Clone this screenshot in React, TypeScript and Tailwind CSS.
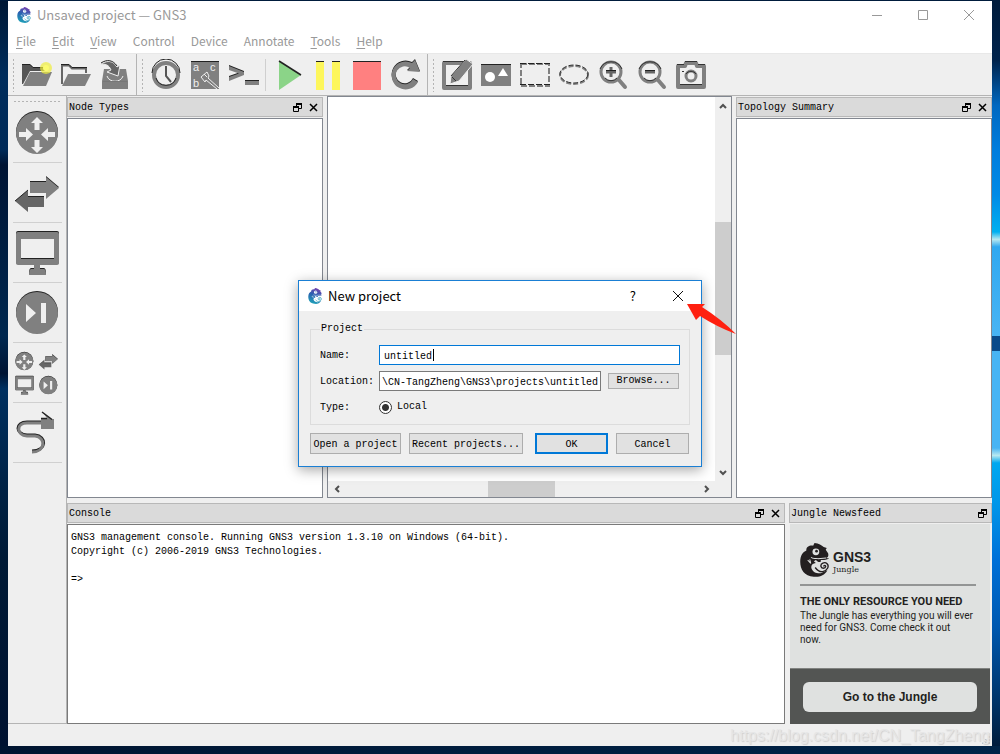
import { useId } from 'react';
import type { ReactNode } from 'react';

const menus = ['File', 'Edit', 'View', 'Control', 'Device', 'Annotate', 'Tools', 'Help'];
const underlined = ['File', 'Edit', 'View', 'Tools', 'Help'];

// Draws a shape twice so that its top edge gets the dark line of the classic icon set
function Embossed({ children }: { children: ReactNode }) {
  return (
    <>
      <g fill="#222" stroke="none">{children}</g>
      <g fill="#808080" transform="translate(0 1)">{children}</g>
    </>
  );
}

function Chameleon({ color, detail, className }: { color?: string; detail: string; className: string }) {
  const id = useId();
  return (
    <svg viewBox="0 0 84 100" className={className} aria-hidden="true">
      <defs>
        <linearGradient id={id} x1="0.7" y1="0" x2="0.4" y2="1">
          <stop offset="0" stopColor="#7b3fae" />
          <stop offset="0.45" stopColor="#2b5fb0" />
          <stop offset="1" stopColor="#1fa0b8" />
        </linearGradient>
      </defs>
      <g fill={color || `url(#${id})`}>
        <path d="M38 8L42 0C55 1 63 6 69 12L78 15L75 20L82 30C84 38 82 43 76 44L86 46C76 50 68 51 60 50C63 55 58 57 52 55L46 50L40 54L46 59C36 60 31 66 33 74C37 86 48 90 60 89L80 80C71 96 56 101 40 99C12 97 0 78 0 55C0 36 8 27 18 22C17 12 27 6 38 8Z" />
        <path d="M44 72C50 80 56 86 66 84C80 82 86 68 79 61C72 54 59 60 61 69C62 76 74 76 75 69C75 65 69 65 69 69" fill="none" stroke={color || '#1f95b5'} strokeWidth="4" />
      </g>
      <circle cx="46" cy="26" r="10" fill={detail} />
      <circle cx="48" cy="24" r="4" fill={color || '#2b5fb0'} />
      <path d="M32 42C36 48 46 44 52 46L76 44M22 50L31 60L28 48" fill="none" stroke={detail} strokeWidth="3" />
    </svg>
  );
}

function Icon({ children }: { children: ReactNode }) {
  return (
    <svg width="32" height="32" viewBox="0 0 32 32" fill="#808080" aria-hidden="true">
      {children}
    </svg>
  );
}

const FolderBack = () => <path d="M1 6Q1 5 2 5H9L12 8H24V12H9L2 25H1Z" />;

const newIcon = (
  <Icon>
    <g fill="#555"><FolderBack /></g>
    <path d="M1 5.500H9L12 8.500H24" fill="none" stroke="#222" />
    <path d="M9 13H31L25 27H2Z" />
    <circle cx="25" cy="9" r="6" fill="#f0ee3c" opacity="0.7" />
    <circle cx="25" cy="9" r="3" fill="#fbfb70" />
  </Icon>
);

const openIcon = (
  <Icon>
    <path d="M2 25V6.500H9L12 9.500H26V14" fill="none" stroke="#666" strokeWidth="2" />
    <path d="M1 5.500H9L12 8.500H27" fill="none" stroke="#222" />
    <path d="M8 15H31L25 27H2Z" />
  </Icon>
);

const saveIcon = (
  <Icon>
    <path d="M5 10H27L29 22V30H3V22Z" />
    <path d="M8 17C10 24 22 24 24 17" fill="none" stroke="#efefef" />
    <path d="M4 22.500H28" stroke="#777" />
    <path d="M1 6C7 1 14 1 18 8L21 6L19 17L8 13L12 11C10 6 6 4 1 6Z" fill="#666" stroke="#efefef" />
    <path d="M2 4C8 0 14 1 18 7" fill="none" stroke="#222" />
  </Icon>
);

const clockIcon = (
  <Icon>
    <circle cx="16" cy="16" r="12" fill="none" stroke="#808080" strokeWidth="4" />
    <path d="M2 14A14 14 0 0 1 30 14M6 19A10.500 10.500 0 0 0 26 19" fill="none" stroke="#222" />
    <path d="M16 7V17L21 23" fill="none" stroke="#555" strokeWidth="2" />
  </Icon>
);

const labelsIcon = (
  <Icon>
    <path d="M2 2H30V30H2Z" />
    <path d="M2 2.500H30" stroke="#222" />
    <g fill="#efefef" fontFamily="Liberation Sans" fontSize="11">
      <text x="4" y="12">a</text>
      <text x="21" y="12">c</text>
      <text x="4" y="28">b</text>
    </g>
    <path d="M12 18L18 13L20 17L19 19L30 29M28 30L17 21L16 23L12 18M15 15L18 18" fill="none" stroke="#efefef" />
  </Icon>
);

const consoleIcon = (
  <Icon>
    <Embossed>
      <path d="M1 6L16 12V15L1 21V17L11 13.500L1 10Z" />
      <path d="M17 21H31V25H17Z" />
    </Embossed>
  </Icon>
);

const playIcon = (
  <Icon>
    <path d="M6 2L28 16L6 31Z" fill="#8bd488" />
    <path d="M6 2L28 16" stroke="#222" strokeWidth="1.500" />
  </Icon>
);

const pauseIcon = (
  <Icon>
    <path d="M4 2H12V31H4ZM20 2H28V31H20Z" fill="#fdf65c" />
    <path d="M4 2.500H12M20 2.500H28" stroke="#222" />
  </Icon>
);

const stopIcon = (
  <Icon>
    <path d="M2 2H30V31H2Z" fill="#ff8080" />
    <path d="M2 2.500H30" stroke="#222" />
  </Icon>
);

const reloadIcon = (
  <Icon>
    <Embossed>
      <path d="M22 3L25 0L30 12L17 11L20 8A9 9 0 1 0 23 19L28 22A14 14 0 1 1 22 3Z" />
    </Embossed>
  </Icon>
);

const noteIcon = (
  <Icon>
    <path d="M3 4H29V29H3Z" fill="none" stroke="#808080" strokeWidth="4" strokeLinejoin="round" />
    <path d="M2 2.500H26M5 26.500H27" stroke="#333" />
    <path d="M25 0L32 5L18 22L9 25L10 17Z" stroke="#efefef" />
    <path d="M11 18L15 22M24 1L10 17" stroke="#333" />
  </Icon>
);

const pictureIcon = (
  <Icon>
    <path d="M1 5H31V27H1Z" />
    <path d="M1 5.500H31" stroke="#222" />
    <circle cx="10" cy="18" r="5" fill="#fff" />
    <path d="M23 9L28 17H18Z" fill="#fff" />
  </Icon>
);

const rectIcon = (
  <Icon>
    <path d="M2 5H30V27H2Z" fill="none" stroke="#808080" strokeWidth="2" strokeDasharray="6 2" />
    <path d="M1 4.500H31M1 25.500H31" stroke="#222" strokeDasharray="6 2" />
  </Icon>
);

const ellipseIcon = (
  <Icon>
    <ellipse cx="16" cy="16" rx="14" ry="9" fill="none" stroke="#808080" strokeWidth="2" strokeDasharray="5 2" />
    <ellipse cx="16" cy="15" rx="14" ry="9" fill="none" stroke="#333" strokeDasharray="5 2" />
  </Icon>
);

const zoomIcon = (plus: boolean) => (
  <Icon>
    <circle cx="14" cy="13" r="10" fill="none" stroke="#808080" strokeWidth="3" />
    <path d="M22 21L28 28" stroke="#808080" strokeWidth="4" strokeLinecap="round" />
    <path d="M3 10A12 12 0 0 1 25 10M8 19A8 8 0 0 0 20 19" fill="none" stroke="#333" />
    <path d={plus ? 'M9 13H19M14 8V18' : 'M9 13H19'} stroke="#666" strokeWidth="3" />
    <path d="M9 11.500H19" stroke="#222" />
  </Icon>
);

const cameraIcon = (
  <Icon>
    <path d="M3 7H10L11 4H21L22 7H29V28H3Z" fill="none" stroke="#808080" strokeWidth="4" strokeLinejoin="round" />
    <path d="M2 5.500H9M10 2.500H22M23 5.500H30M5 25.500H27" stroke="#333" />
    <circle cx="16" cy="17" r="5" fill="none" stroke="#808080" strokeWidth="3" />
    <path d="M11 15A6 6 0 0 1 21 15M7 12.500H9" fill="none" stroke="#333" />
  </Icon>
);

type Tool = { label: string; icon: ReactNode };

const fileTools: Tool[] = [
  { label: 'New project', icon: newIcon },
  { label: 'Open project', icon: openIcon },
  { label: 'Save project as', icon: saveIcon },
];
const viewTools: Tool[] = [
  { label: 'Snapshot', icon: clockIcon },
  { label: 'Show interface labels', icon: labelsIcon },
  { label: 'Console to all devices', icon: consoleIcon },
];
const controlTools: Tool[] = [
  { label: 'Start all', icon: playIcon },
  { label: 'Suspend all', icon: pauseIcon },
  { label: 'Stop all', icon: stopIcon },
  { label: 'Reload all', icon: reloadIcon },
];
const drawTools: Tool[] = [
  { label: 'Add a note', icon: noteIcon },
  { label: 'Insert a picture', icon: pictureIcon },
  { label: 'Draw a rectangle', icon: rectIcon },
  { label: 'Draw an ellipse', icon: ellipseIcon },
  { label: 'Zoom in', icon: zoomIcon(true) },
  { label: 'Zoom out', icon: zoomIcon(false) },
  { label: 'Screenshot', icon: cameraIcon },
];

function ToolGroup({ tools }: { tools: Tool[] }) {
  return (
    <div className="flex">
      {tools.map((t) => (
        <button key={t.label} aria-label={t.label} className="w-[39px] h-10 flex items-center justify-center">
          {t.icon}
        </button>
      ))}
    </div>
  );
}

const Grip = () => <div className="w-[3px] h-[34px] bg-[radial-gradient(circle,#b4b4b4_1px,transparent_1px)] bg-[length:3px_4px]" />;

// Device glyphs share a 48x48 grid
const router = (
  <>
    <Embossed><circle cx="24" cy="23" r="21" /></Embossed>
    <path d="M24 8L30 14H26.500V21H21.500V14H18ZM24 44L18 38H21.500V31H26.500V38H30ZM6 23H13V19L20 25.500L13 32V28H6ZM42 23H35V19L28 25.500L35 32V28H42Z" fill="#efefef" />
  </>
);
const switchArrows = (
  <>
    <Embossed><path d="M17 12H33V7L46 18L33 29V23H17Z" /></Embossed>
    <path d="M31 27H15V21L2 32L15 43V38H31Z" fill="#666" />
    <path d="M2 32L15 21M15 27.500H31" stroke="#222" fill="none" />
  </>
);
const monitor = (
  <>
    <Embossed>
      <path fillRule="evenodd" d="M5 2H44Q46 2 46 4V33Q46 35 44 35H5Q3 35 3 33V4Q3 2 5 2ZM8 9V29H41V9Z" />
      <path d="M21 35H27V39H31Q33 39 33 45H16Q16 39 18 39H21Z" />
    </Embossed>
  </>
);
const skip = (
  <>
    <Embossed><circle cx="24" cy="23" r="21" /></Embossed>
    <path d="M13 15L23 24L13 33ZM28 14H33V34H28Z" fill="#efefef" />
  </>
);

const devices: { label: string; icon: ReactNode }[] = [
  { label: 'Browse Routers', icon: router },
  { label: 'Browse Switches', icon: switchArrows },
  { label: 'Browse End Devices', icon: monitor },
  { label: 'Browse Security Devices', icon: skip },
  {
    label: 'Browse all devices',
    icon: (
      <>
        <g transform="translate(1 2) scale(.43)">{router}</g>
        <g transform="translate(25 2) scale(.43)">{switchArrows}</g>
        <g transform="translate(1 26) scale(.43)">{monitor}</g>
        <g transform="translate(25 26) scale(.43)">{skip}</g>
      </>
    ),
  },
  {
    label: 'Add a link',
    icon: (
      <>
        <path d="M29 13H14C2 13 2 25 14 26H22C34 27 34 42 19 42" fill="none" stroke="#222" strokeWidth="3" />
        <path d="M29 14H14C3 14 3 26 14 27H22C33 28 33 43 19 43" fill="none" stroke="#808080" strokeWidth="3" />
        <path d="M28 9H34L30 4L38 10H41V20H28Z" />
        <path d="M28 9.500H34M29 3L39 10.500" stroke="#222" strokeWidth="1.500" />
      </>
    ),
  },
];

const RestoreIcon = () => (
  <svg width="9" height="9" viewBox="0 0 9 9" fill="none" stroke="#000" aria-hidden="true">
    <path d="M3 1H9M0 4H6" strokeWidth="2" />
    <path d="M3.500 2V3M8.500 1V5.500H6M.5 4V8.500H5.500V4" />
  </svg>
);

const CrossIcon = () => (
  <svg width="9" height="9" viewBox="0 0 9 9" stroke="#000" strokeWidth="1.500" aria-hidden="true">
    <path d="M1 1L8 8M8 1L1 8" />
  </svg>
);

function DockHeader({ title, closable = true }: { title: string; closable?: boolean }) {
  return (
    <div className="h-5 shrink-0 flex items-center justify-between pl-px pr-1 bg-[#dadada] border border-[#b8b8b8]">
      <h2 className="pt-0.5">{title}</h2>
      <div className="flex gap-[7px]">
        <button aria-label={`Float ${title}`}><RestoreIcon /></button>
        {closable && <button aria-label={`Close ${title}`}><CrossIcon /></button>}
      </div>
    </div>
  );
}

function ScrollArrow({ d, label, className }: { d: string; label: string; className: string }) {
  return (
    <button aria-label={label} className={`flex items-center justify-center ${className}`}>
      <svg width="8" height="8" viewBox="0 0 8 8" fill="none" stroke="#505050" strokeWidth="2" aria-hidden="true">
        <path d={d} />
      </svg>
    </button>
  );
}

function Canvas() {
  return (
    <section className="flex-1 min-w-0 flex flex-col bg-[#efefef] border border-[#828790]">
      <div className="flex-1 flex">
        <div className="flex-1 bg-white" />
        <div className="w-4 flex flex-col">
          <ScrollArrow label="Scroll up" d="M1 6L4 3L7 6" className="h-[17px]" />
          <div className="flex-[108]" />
          <div className="flex-[133] bg-[#cdcdcd]" />
          <div className="flex-[109]" />
          <ScrollArrow label="Scroll down" d="M1 2L4 5L7 2" className="h-[17px]" />
        </div>
      </div>
      <div className="h-4 flex pr-4">
        <ScrollArrow label="Scroll left" d="M6 1L3 4L6 7" className="w-[17px]" />
        <div className="flex-[143]" />
        <div className="flex-[67] bg-[#cdcdcd]" />
        <div className="flex-[143]" />
        <ScrollArrow label="Scroll right" d="M2 1L5 4L2 7" className="w-[17px]" />
      </div>
    </section>
  );
}

function Newsfeed() {
  return (
    <section className="w-[203px] flex flex-col gap-px">
      <DockHeader title="Jungle Newsfeed" closable={false} />
      <div className="flex-1 ml-px mr-0.5 flex flex-col bg-[#dfe1e0] text-[#231f20] font-['Roboto',sans-serif]">
        <div className="flex-1 pt-[19px] pl-2.5 pr-3.5">
          <div className="flex items-center gap-1 pb-[7px] border-b-2 border-[#939595]">
            <Chameleon color="#231f20" detail="#dfe1e0" className="w-[29px] h-[34px]" />
            <div className="pt-1">
              <div className="text-[14px] leading-4 font-bold font-['Liberation_Sans',sans-serif]">GNS3</div>
              <div className="text-[8px] leading-[10px] font-['DejaVu_Serif',serif]">Jungle</div>
            </div>
          </div>
          <h3 className="mt-2 text-[11px] leading-4 font-bold whitespace-nowrap">THE ONLY RESOURCE YOU NEED</h3>
          <p className="text-[10px] leading-3 whitespace-nowrap">
            The Jungle has everything you will ever<br />
            need for GNS3. Come check it out<br />
            now.
          </p>
        </div>
        <div className="h-14 flex items-center px-[13px] bg-[#535553] border-t border-[#808280]">
          <button className="w-full h-[30px] rounded-md bg-[#dfe1e0] text-[12px] font-bold font-['Liberation_Sans',sans-serif]">Go to the Jungle</button>
        </div>
      </div>
    </section>
  );
}

function NewProjectDialog() {
  const button = 'h-[21px] pt-0.5 bg-[#e1e1e1] border border-[#adadad] whitespace-nowrap';
  return (
    <div role="dialog" aria-label="New project" className="relative w-[404px] bg-[#efefef] border border-[#1a7fd4] shadow-[0_3px_12px_rgba(0,0,0,0.35)]">
      <div className="h-[30px] flex items-center pl-2 pr-[17px] bg-white font-['Noto_Sans_CJK_SC',sans-serif] text-[13px]">
        <Chameleon detail="#fff" className="w-4 h-4" />
        <span className="ml-[5px]">New project</span>
        <button className="ml-auto mr-9" aria-label="Help">?</button>
        <button aria-label="Close">
          <svg width="12" height="12" viewBox="0 0 12 12" stroke="#111" aria-hidden="true">
            <path d="M1 1L11 11M11 1L1 11" />
          </svg>
        </button>
      </div>
      <form className="px-[11px] pt-[11px] pb-3">
        <fieldset className="h-[103px] border border-[#dcdcdc] px-[9px] pt-[9px]">
          <legend className="px-px leading-[14px]">Project</legend>
          <div className="grid grid-cols-[59px_1fr] gap-y-1.5 items-center">
            <label htmlFor="name" className="pt-0.5">Name:</label>
            <div className="relative flex">
              <input id="name" defaultValue="untitled" className="flex-1 min-w-0 h-5 px-1 pt-0.5 bg-white border border-[#0078d7] focus:outline-none" />
              <span className="absolute left-[54px] top-1 w-px h-3 bg-black" />
            </div>
            <label htmlFor="location" className="pt-0.5">Location:</label>
            <div className="flex items-center gap-[7px] pr-px">
              <input id="location" defaultValue="\CN-TangZheng\GNS3\projects\untitled" className="flex-1 min-w-0 h-5 px-0.5 pt-0.5 bg-white border border-[#7a7a7a]" />
              <button type="button" className="w-[71px] h-4 bg-[#e1e1e1] border border-[#adadad] leading-[14px]">Browse...</button>
            </div>
            <span className="pt-0.5">Type:</span>
            <label className="h-5 flex items-center gap-[5px]">
              <input type="radio" name="type" defaultChecked className="appearance-none w-[13px] h-[13px] rounded-full border border-[#333] bg-[radial-gradient(circle,#333_3px,#fff_4px)]" />
              Local
            </label>
          </div>
        </fieldset>
        <div className="mt-2 flex">
          <button type="button" className={`w-[91px] ${button}`}>Open a project</button>
          <button type="button" className={`w-[114px] ml-2 ${button}`}>Recent projects...</button>
          <button type="button" className="w-[73px] ml-3 h-[21px] pt-0.5 bg-[#e1e1e1] border-2 border-[#0078d7]">OK</button>
          <button type="button" className={`w-[73px] ml-2 ${button}`}>Cancel</button>
        </div>
      </form>
      {/* pointer to the close button */}
      <svg width="50" height="32" viewBox="0 0 50 32" className="absolute top-[23px] left-[388px]" aria-hidden="true">
        <path d="M0 0L18 0L15 3Q34 15 49 30Q30 23 13 12L9 16Z" fill="#ff2010" />
      </svg>
    </div>
  );
}

export default function App() {
  return (
    <div className="h-screen flex flex-col pt-px bg-[#001c3c] font-['Liberation_Mono',monospace] text-[10px] leading-[14px] text-black">
      <div className="flex-1 min-h-0 flex">
        <div className="w-2 bg-[linear-gradient(#001835,#002d5c_10%,#002a58_20%,#001433_22%,#002850_45%,#001433_50%,#003060_52%,#002245_65%,#001a36_75%,#001230)]" />

        <div className="relative flex-1 min-w-0 flex flex-col bg-[#efefef]">
          <header className="bg-white text-[#999] font-['Noto_Sans_CJK_SC',sans-serif]">
            <div className="h-7 flex items-center pl-2 pr-[17px] text-[13px]">
              <Chameleon detail="#fff" className="w-4 h-4" />
              <h1 className="ml-[5px]">Unsaved project — GNS3</h1>
              <div className="ml-auto flex items-center gap-[34px]">
                <button aria-label="Minimize">
                  <svg width="12" height="12" viewBox="0 0 12 12" stroke="#999"><path d="M1 6.500H11" /></svg>
                </button>
                <button aria-label="Maximize">
                  <svg width="12" height="12" viewBox="0 0 12 12" fill="none" stroke="#999"><path d="M1.500 1.500H10.500V10.500H1.500Z" /></svg>
                </button>
                <button aria-label="Close">
                  <svg width="12" height="12" viewBox="0 0 12 12" stroke="#999"><path d="M1 1L11 11M11 1L1 11" /></svg>
                </button>
              </div>
            </div>
            <nav className="h-6 flex items-center gap-4 pl-2 text-[12px]">
              {menus.map((m) => (
                <button key={m}>
                  {underlined.includes(m) ? <><u className="underline-offset-2">{m[0]}</u>{m.slice(1)}</> : m}
                </button>
              ))}
            </nav>
          </header>

          <div className="h-[43px] shrink-0 flex items-center border-t border-b border-t-[#e8e8e8] border-b-[#b4b4b4]">
            <div className="pl-1 pr-0.5 flex items-center gap-0.5">
              <Grip />
              <ToolGroup tools={fileTools} />
            </div>
            <div className="h-full pl-1 pr-0.5 flex items-center gap-0.5 border-l border-[#b4b4b4]">
              <Grip />
              <ToolGroup tools={viewTools} />
              <div className="w-px h-8 mr-px bg-[#cfcfcf]" />
              <ToolGroup tools={controlTools} />
            </div>
            <div className="h-full pl-1 flex items-center gap-0.5 border-l border-[#b4b4b4]">
              <Grip />
              <ToolGroup tools={drawTools} />
            </div>
          </div>

          <main className="flex-1 min-h-0 flex">
            <aside className="w-[59px] shrink-0 border-r border-b border-[#b4b4b4] pl-[5px] pr-1 pt-1">
              <div className="h-[3px] bg-[radial-gradient(circle,#b4b4b4_1px,transparent_1px)] bg-[length:4px_3px]" />
              {devices.map((d) => (
                <button key={d.label} aria-label={d.label} className="w-full h-[60px] flex items-center border-b border-[#d0d0d0]">
                  <svg width="48" height="48" viewBox="0 0 48 48" fill="#808080" aria-hidden="true">{d.icon}</svg>
                </button>
              ))}
            </aside>

            <div className="flex-1 min-w-0 flex flex-col gap-[5px]">
              <div className="flex-1 flex gap-1">
                <section className="w-[256px] flex flex-col gap-px pt-px">
                  <DockHeader title="Node Types" />
                  <div className="flex-1 bg-white border border-[#828790]" />
                </section>
                <Canvas />
                <section className="w-[256px] flex flex-col gap-px pt-px">
                  <DockHeader title="Topology Summary" />
                  <div className="flex-1 bg-white border border-[#828790]" />
                </section>
              </div>
              <div className="h-[221px] flex gap-1">
                <section className="flex-1 flex flex-col gap-px">
                  <DockHeader title="Console" />
                  <pre className="flex-1 px-[3px] py-1.5 bg-white border border-[#7a7a7a] font-['Liberation_Mono',monospace]">
                    {'GNS3 management console. Running GNS3 version 1.3.10 on Windows (64-bit).\nCopyright (c) 2006-2019 GNS3 Technologies.\n\n=>'}
                  </pre>
                </section>
                <Newsfeed />
              </div>
            </div>
          </main>

          <footer className="h-[22px] shrink-0 flex items-end justify-end">
            <svg width="10" height="10" viewBox="0 0 10 10" fill="#bbb" aria-hidden="true">
              <path d="M6 0H8V2H6ZM3 3H5V5H3ZM6 3H8V5H6ZM0 6H2V8H0ZM3 6H5V8H3ZM6 6H8V8H6Z" />
            </svg>
          </footer>

          <div className="absolute inset-0 flex items-center justify-center">
            <NewProjectDialog />
          </div>
          <div className="absolute right-0.5 bottom-0 text-[16px] leading-5 whitespace-nowrap text-[#e6e6e6] font-['Liberation_Sans',sans-serif] [text-shadow:1px_1px_1px_#d0d0d0]">
            https://blog.csdn.net/CN_TangZheng
          </div>
        </div>

        <div className="w-2 bg-[linear-gradient(#001c3c,#00234c_8%,#0068c0_14%,#007ddd_20%,#008ae6_26%,#00b0f0_31%,#b8e8f0_32%,#30a8f0_33%,#48b4f4_45%,#0a4a8a_45%,#0a4a8a_47%,#48b4f4_47%,#48b4f4_60%,#b8e8f0_61%,#00a8f0_62%,#0094e8_68%,#0070d8_75%,#0058b0_84%,#003468_94%,#001c3c)]" />
      </div>
      <div className="h-2 shrink-0 bg-[linear-gradient(90deg,#001430,#001c3c_40%,#002448)]" />
    </div>
  );
}
